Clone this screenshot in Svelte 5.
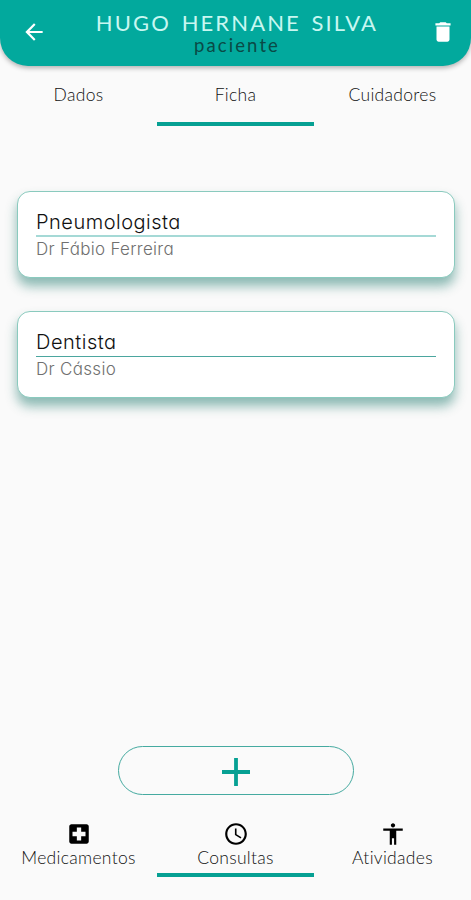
<script>
	const tabs = [
		{ name: 'Dados' },
		{ name: 'Ficha' },
		{ name: 'Cuidadores' }
	];

	const appointments = [
		{ specialty: 'Pneumologista', doctor: 'Dr Fábio Ferreira' },
		{ specialty: 'Dentista', doctor: 'Dr Cássio' }
	];

	const sections = [
		{
			name: 'Medicamentos',
			icon: 'M19 3H5c-1.1 0-1.99.9-1.99 2L3 19c0 1.1.9 2 2 2h14c1.1 0 2-.9 2-2V5c0-1.1-.9-2-2-2zm-1 11h-4v4h-4v-4H6v-4h4V6h4v4h4v4z'
		},
		{
			name: 'Consultas',
			icon: 'M11.99 2C6.47 2 2 6.48 2 12s4.47 10 9.99 10C17.52 22 22 17.52 22 12S17.52 2 11.99 2zM12 20c-4.42 0-8-3.58-8-8s3.58-8 8-8 8 3.58 8 8-3.58 8-8 8zm.5-13H11v6l5.25 3.15.75-1.23-4.5-2.67z'
		},
		{
			name: 'Atividades',
			icon: 'M12 2c1.1 0 2 .9 2 2s-.9 2-2 2-2-.9-2-2 .9-2 2-2zm9 7h-6v13h-2v-6h-2v6H9V9H3V7h18v2z'
		}
	];

	let activeTab = $state('Ficha');
	let activeSection = $state('Consultas');
</script>

<div class="screen">
	<header>
		<button class="back" aria-label="Voltar">
			<svg viewBox="0 0 24 24"><path d="M20 11H7.83l5.59-5.59L12 4l-8 8 8 8 1.41-1.41L7.83 13H20v-2z" /></svg>
		</button>
		<div class="patient">
			<h1>HUGO HERNANE SILVA</h1>
			<p>paciente</p>
		</div>
		<button class="delete" aria-label="Excluir">
			<svg viewBox="0 0 24 24"><path d="M6 19c0 1.1.9 2 2 2h8c1.1 0 2-.9 2-2V7H6v12zM19 4h-3.5l-1-1h-5l-1 1H5v2h14V4z" /></svg>
		</button>
	</header>

	<nav class="tabs">
		{#each tabs as tab}
			<button class:active={activeTab === tab.name} onclick={() => (activeTab = tab.name)}>
				<span>{tab.name}</span>
			</button>
		{/each}
	</nav>

	<main>
		{#each appointments as item}
			<article class="card">
				<h2>{item.specialty}</h2>
				<p>{item.doctor}</p>
			</article>
		{/each}
	</main>

	<button class="add" aria-label="Adicionar">
		<svg viewBox="0 0 28 28"><path d="M14 0v28M0 14h28" /></svg>
	</button>

	<nav class="sections">
		{#each sections as section}
			<button class:active={activeSection === section.name} onclick={() => (activeSection = section.name)}>
				<svg viewBox="0 0 24 24"><path d={section.icon} /></svg>
				<span>{section.name}</span>
			</button>
		{/each}
	</nav>
</div>

<style>
	:global(body) {
		margin: 0;
		background: #fafafa;
	}

	.screen {
		display: flex;
		flex-direction: column;
		height: 900px;
		overflow: hidden;
		background: #fafafa;
		font-family: Lato, sans-serif;
	}

	button {
		padding: 0;
		border: none;
		background: none;
		font: inherit;
		cursor: pointer;
	}

	h1,
	h2,
	p {
		margin: 0;
		font-weight: 400;
		white-space: nowrap;
	}

	header {
		display: flex;
		justify-content: space-between;
		box-sizing: border-box;
		height: 66px;
		padding: 19px 15px 0 21px;
		border-radius: 0 0 28px 28px;
		background: #02a99d;
		box-shadow: 0 2px 5px rgba(0, 0, 0, 0.3);

		svg {
			display: block;
			width: 26px;
			height: 26px;
			fill: #fff;
		}
	}

	.back,
	.delete {
		height: 26px;
	}

	.patient {
		margin: -10px 3px 0 0;
		text-align: center;

		h1 {
			color: #c8f7f1;
			font-size: 22px;
			line-height: 27px;
			letter-spacing: 2.1px;
			word-spacing: 3px;
		}

		p {
			color: #0a4a46;
			font-size: 18.5px;
			line-height: 18px;
			letter-spacing: 2.1px;
		}
	}

	.tabs,
	.sections {
		display: grid;
		grid-template-columns: repeat(3, 1fr);

		button {
			display: flex;
			flex-direction: column;
			align-items: center;
			border-bottom: 4px solid transparent;
			color: #111;
			font-size: 17.5px;
			font-weight: 300;
			line-height: 20px;
			letter-spacing: 0.3px;
		}

		.active {
			border-color: #06a093;
		}
	}

	.tabs button {
		height: 60px;
		padding-top: 19px;
	}

	main {
		display: flex;
		flex-direction: column;
		gap: 33px;
		height: 556px;
		box-sizing: border-box;
		padding: 65px 16px 0 17px;
	}

	.card {
		box-sizing: border-box;
		height: 87px;
		padding: 16px 18px 0;
		border: 1px solid #8acabe;
		border-radius: 13px;
		background: #fff;
		box-shadow: 0 8px 12px rgba(0, 105, 92, 0.45);
		font-family: Inter, sans-serif;
		font-feature-settings: 'cv11';

		h2 {
			height: 27px;
			border-bottom: 2px solid #a5d9d6;
			color: #111;
			font-size: 20px;
			font-weight: 300;
			line-height: 28px;
			letter-spacing: 0.5px;
		}

		p {
			color: #707070;
			font-size: 17px;
			font-weight: 300;
			line-height: 24px;
			letter-spacing: 0.3px;
		}
	}

	.card + .card h2 {
		height: 28px;
		border-bottom: 1px solid #4ba69f;
	}

	.add {
		display: flex;
		align-items: center;
		justify-content: center;
		align-self: center;
		box-sizing: border-box;
		width: 236px;
		height: 49px;
		margin-top: 64px;
		border: 1px solid #45aaa0;
		border-radius: 25px;

		svg {
			width: 28px;
			height: 28px;
			margin-top: 2px;
			stroke: #06a093;
			stroke-width: 3.8;
		}
	}

	.sections {
		margin-top: 25px;

		button {
			height: 57px;
		}

		svg {
			width: 26px;
			height: 26px;
			margin-top: 1px;
		}

		span {
			margin-top: 1px;
		}
	}
</style>
